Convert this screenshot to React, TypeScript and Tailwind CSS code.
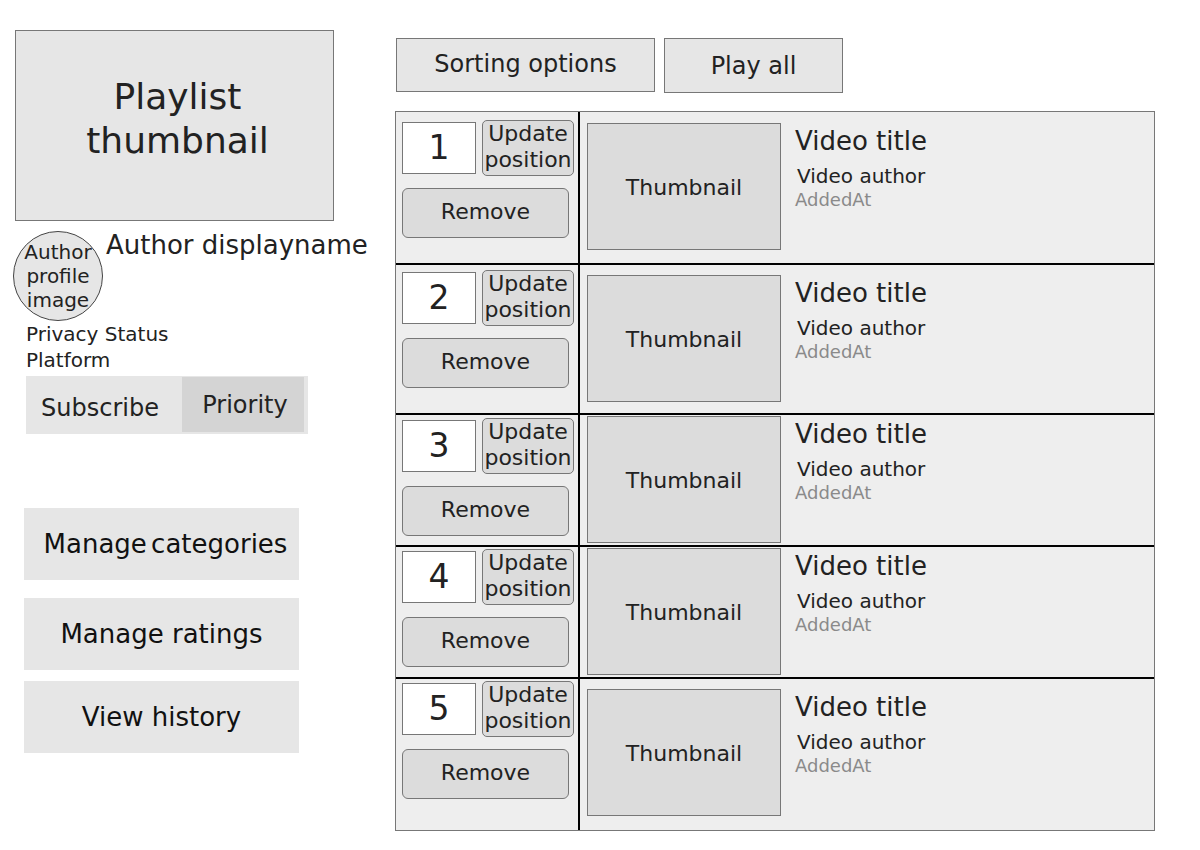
import React from 'react';

type Row = {
  pos: number;
  h: string;
  leftPt: string;
  rightPt: string;
};

const rows: Row[] = [
  { pos: 1, h: 'h-[151px]', leftPt: 'pt-[8px]', rightPt: 'pt-[11px]' },
  { pos: 2, h: 'h-[150px]', leftPt: 'pt-[5px]', rightPt: 'pt-[10px]' },
  { pos: 3, h: 'h-[132px]', leftPt: 'pt-[3px]', rightPt: 'pt-[1px]' },
  { pos: 4, h: 'h-[132px]', leftPt: 'pt-[2px]', rightPt: 'pt-[1px]' },
  { pos: 5, h: 'h-[150px]', leftPt: 'pt-[2px]', rightPt: 'pt-[10px]' },
];

function PlaylistRow({ row, first }: { row: Row; first: boolean }) {
  return (
    <div
      className={`flex ${row.h} ${first ? '' : 'border-t-2 border-black'}`}
    >
      {/* position controls */}
      <div
        className={`flex w-[184px] shrink-0 flex-col border-r-2 border-black pl-[6px] ${row.leftPt}`}
      >
        <div className="flex items-start gap-[6px]">
          <div className="mt-[2px] flex h-[52px] w-[74px] items-center justify-center border border-[#777] bg-white text-[33px] text-[#222]">
            {row.pos}
          </div>
          <button className="flex h-[56px] w-[92px] flex-col items-center justify-center rounded-[5px] border border-[#777] bg-[#dcdcdc] pb-[3px] text-[22px] leading-[26px] text-[#222]">
            <span>Update</span>
            <span>position</span>
          </button>
        </div>
        <button className="mt-[12px] flex h-[50px] w-[167px] items-center justify-center rounded-[6px] border border-[#777] bg-[#dcdcdc] pb-[3px] text-[22px] text-[#222]">
          Remove
        </button>
      </div>

      {/* video */}
      <div className={`flex flex-1 items-start pl-[7px] ${row.rightPt}`}>
        <div className="flex h-[127px] w-[194px] shrink-0 items-center justify-center border border-[#777] bg-[#dcdcdc] pt-[2px] text-[22px] text-[#222]">
          Thumbnail
        </div>
        <div className="ml-[14px] flex flex-col pt-[3px]">
          <div className="text-[26px] leading-[30px] text-[#222]">
            Video title
          </div>
          <div className="ml-[2px] mt-[8px] text-[20px] leading-[24px] text-[#222]">
            Video author
          </div>
          <div className="mt-[2px] text-[18px] leading-[20px] text-[#8a8a8a]">
            AddedAt
          </div>
        </div>
      </div>
    </div>
  );
}

export default function App() {
  return (
    <div className="flex h-[850px] w-[1200px] bg-white font-['DejaVu_Sans',sans-serif] text-[#222]">
      {/* left column */}
      <div className="flex w-[382px] shrink-0 flex-col pl-[13px] pt-[30px]">
        <div className="ml-[2px] flex h-[191px] w-[319px] items-center justify-center border border-[#777] bg-[#e6e6e6] pb-[14px] pl-[6px] text-center text-[36px] leading-[44px]">
          Playlist
          <br />
          thumbnail
        </div>

        <div className="mt-[10px] flex items-start gap-[3px]">
          <div className="flex h-[90px] w-[90px] shrink-0 items-center justify-center rounded-full border border-[#444] bg-[#e6e6e6] text-center text-[20px] leading-[24px]">
            Author
            <br />
            profile
            <br />
            image
          </div>
          <div className="text-[26px] leading-[29px]">Author displayname</div>
        </div>

        <div className="ml-[13px] text-[20px] leading-[26px]">
          Privacy Status
          <br />
          Platform
        </div>

        <div className="ml-[13px] mt-[3px] flex h-[58px] w-[282px] items-start bg-[#e6e6e6] pr-[4px] pt-[1px]">
          <div className="flex h-[57px] flex-1 items-center justify-center pr-[8px] pt-[4px] text-[24px]">
            Subscribe
          </div>
          <div className="flex h-[55px] w-[122px] items-center justify-center bg-[#d4d4d4] pl-[4px] text-[24px]">
            Priority
          </div>
        </div>

        <div className="ml-[11px] mt-[74px] flex h-[72px] w-[275px] items-center justify-center bg-[#e6e6e6] pl-[8px] text-[26px] text-[#111] [word-spacing:-4px]">
          Manage categories
        </div>
        <div className="ml-[11px] mt-[18px] flex h-[72px] w-[275px] items-center justify-center bg-[#e6e6e6] text-[26px] text-[#111]">
          Manage ratings
        </div>
        <div className="ml-[11px] mt-[11px] flex h-[72px] w-[275px] items-center justify-center bg-[#e6e6e6] text-[26px] text-[#111]">
          View history
        </div>
      </div>

      {/* right column */}
      <div className="flex flex-col pl-[13px] pt-[38px]">
        <div className="ml-[1px] flex gap-[9px]">
          <button className="flex h-[54px] w-[259px] items-center justify-center border border-[#777] bg-[#e6e6e6] pb-[3px] text-[24px]">
            Sorting options
          </button>
          <button className="flex h-[55px] w-[179px] items-center justify-center border border-[#777] bg-[#e6e6e6] text-[24px]">
            Play all
          </button>
        </div>

        <div className="mt-[18px] flex h-[720px] w-[760px] flex-col border border-[#777] bg-[#eeeeee]">
          {rows.map((r, i) => (
            <PlaylistRow key={r.pos} row={r} first={i === 0} />
          ))}
          <div className="flex flex-1">
            <div className="w-[184px] shrink-0 border-r-2 border-black" />
          </div>
        </div>
      </div>
    </div>
  );
}
